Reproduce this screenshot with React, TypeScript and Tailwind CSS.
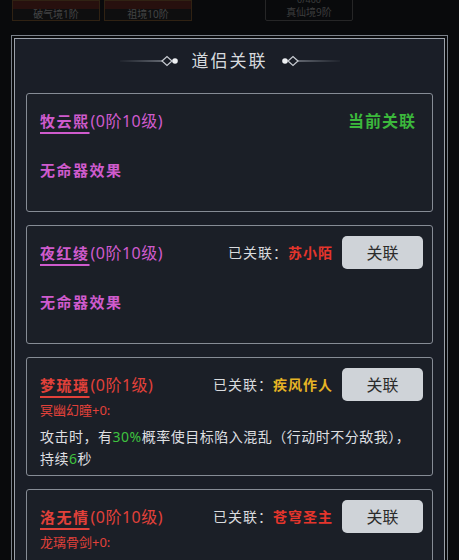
import { ReactNode } from 'react';

interface Partner {
  name: string;
  level: string;
  tone: 'purple' | 'red';
  current?: boolean;
  linkedTo?: string;
  linkedColor?: string;
  weapon?: string;
  desc?: ReactNode;
}

const partners: Partner[] = [
  { name: '牧云熙', level: '(0阶10级)', tone: 'purple', current: true },
  { name: '夜红绫', level: '(0阶10级)', tone: 'purple', linkedTo: '苏小陌', linkedColor: 'text-[#e5352c]' },
  {
    name: '梦琉璃',
    level: '(0阶1级)',
    tone: 'red',
    linkedTo: '疾风作人',
    linkedColor: 'text-[#e6b425]',
    weapon: '冥幽幻瞳+0:',
    desc: (
      <>
        攻击时，有<span className="text-[#3fc23f]">30%</span>概率使目标陷入混乱（行动时不分敌我），
        <br />
        持续<span className="text-[#3fc23f]">6</span>秒
      </>
    ),
  },
  { name: '洛无情', level: '(0阶10级)', tone: 'red', linkedTo: '苍穹圣主', linkedColor: 'text-[#e5352c]', weapon: '龙璃骨剑+0:' },
];

// 标题两侧的装饰线
function TitleOrnament({ flip }: { flip?: boolean }) {
  const id = flip ? 'orn-r' : 'orn-l';
  return (
    <svg width="62" height="12" viewBox="0 0 62 12" className={flip ? 'scale-x-[-1]' : ''}>
      <defs>
        <linearGradient id={id} gradientUnits="userSpaceOnUse" x1="0" y1="6" x2="42" y2="6">
          <stop offset="0" stopColor="#8d939c" stopOpacity="0.1" />
          <stop offset="1" stopColor="#a9afb8" />
        </linearGradient>
      </defs>
      <rect x="0" y="5.5" width="42" height="1" fill={`url(#${id})`} />
      <path d="M42 6 L47 1.5 L52 6 L47 10.5 Z" fill="none" stroke="#c9cdd3" strokeWidth="1.2" />
      <circle cx="55" cy="6" r="2.8" fill="#eef0f3" />
    </svg>
  );
}

function PartnerCard({ p }: { p: Partner }) {
  const nameColor = p.tone === 'purple' ? 'text-[#cf5bcd]' : 'text-[#e2413a]';
  const underline = p.tone === 'purple' ? 'decoration-[#cf5bcd]' : 'decoration-[#e2413a]';
  return (
    <div className="h-[119px] rounded-[3px] border border-[#868c95] bg-[#1b1f27] pl-[13px] pr-[9px] pt-[10px]">
      <div className="flex h-[33px] items-center">
        <div className={`flex-1 text-[15px] font-bold ${nameColor}`}>
          <span className={`underline decoration-2 underline-offset-[5px] tracking-[1.5px] ${underline}`}>{p.name}</span>
          <span className="ml-[1px] text-[16px] font-normal tracking-[0.5px]">{p.level}</span>
        </div>
        {p.current ? (
          <span className="mr-[7px] text-[16px] font-bold tracking-[1px] text-[#3cb83c]">当前关联</span>
        ) : (
          <>
            <span className="text-[14px] tracking-[1px] text-[#d9dbde]">已关联：</span>
            <span className={`mr-[9px] text-[14px] font-bold tracking-[1px] ${p.linkedColor}`}>{p.linkedTo}</span>
            <button className="h-[33px] w-[81px] rounded-[5px] bg-[#cfd3d8] text-[16px] text-[#2b2b2b]">关联</button>
          </>
        )}
      </div>
      {p.weapon ? (
        <>
          <div className={`mt-[1px] text-[13px] leading-[16px] ${nameColor}`}>{p.weapon}</div>
          <div className="mt-[8px] text-[14px] leading-[22px] tracking-[0.5px] text-[#dedfe1]">{p.desc}</div>
        </>
      ) : (
        <div className="mt-[22px] text-[15px] font-bold leading-[22px] tracking-[1.5px] text-[#cf5bcd]">无命器效果</div>
      )}
    </div>
  );
}

export default function App() {
  return (
    <div
      className="relative h-[560px] w-[459px] overflow-hidden bg-[#090a0c]"
      style={{ fontFamily: '"Noto Sans", "Noto Sans CJK SC", sans-serif' }}
    >
      {/* 背景顶部（弹窗后面的界面） */}
      <div className="flex h-[21px] items-end gap-[4px] overflow-hidden pl-[12px] opacity-60">
        <div className="flex h-[21px] w-[88px] shrink-0 flex-col border border-[#4b3218]">
          <div className="h-[8px] bg-[#3c1510]" />
          <div className="flex-1 bg-[#121212] text-center text-[10px] leading-[11px] text-[#6a6a6a]">破气境1阶</div>
        </div>
        <div className="flex h-[21px] w-[88px] shrink-0 flex-col border border-[#4b3218]">
          <div className="h-[8px] bg-[#3c1510]" />
          <div className="flex-1 bg-[#121212] text-center text-[10px] leading-[11px] text-[#6a6a6a]">祖境10阶</div>
        </div>
        <div className="ml-[69px] flex h-[36px] w-[88px] shrink-0 flex-col justify-end rounded-[2px] border border-[#3a3a3a] pb-[1px] text-center text-[10px] leading-[13px] text-[#5e5e5e]">
          <div className="text-[9px]">0/400</div>
          <div>真仙境9阶</div>
        </div>
      </div>

      {/* 弹窗 */}
      <div className="ml-[11px] mt-[14px] w-[437px] border border-[#7b818a] p-[2px]">
        <div className="border border-[#9ca2ab] bg-[#1a1e27] px-[11px] pb-[20px]">
          <div className="flex h-[41px] items-center justify-center gap-[10px] pt-[2px]">
            <TitleOrnament />
            <span className="text-[17px] tracking-[2px] text-[#d7dade]">道侣关联</span>
            <TitleOrnament flip />
          </div>
          <div className="mt-[13px] flex flex-col gap-[13px]">
            {partners.map((p) => (
              <PartnerCard key={p.name} p={p} />
            ))}
          </div>
        </div>
      </div>
    </div>
  );
}
